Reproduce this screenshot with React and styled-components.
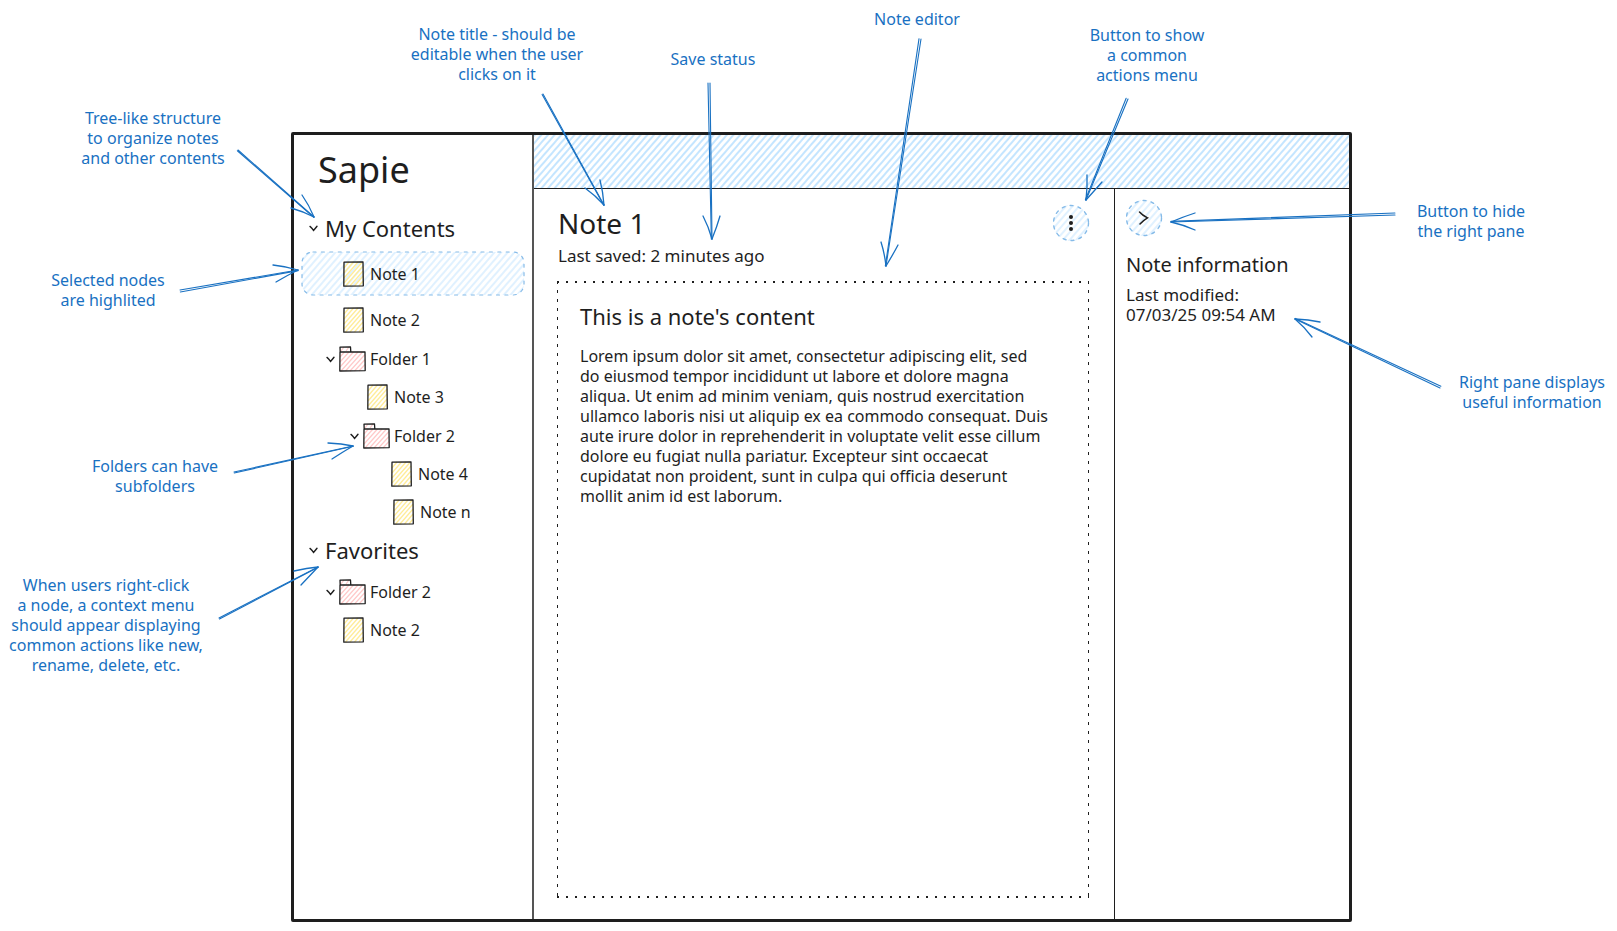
import React from "react";
import styled, { createGlobalStyle, css } from "styled-components";

const ink = "#1e1e1e";
const blue = "#1971c2";

const GlobalStyle = createGlobalStyle`
  *, *::before, *::after { box-sizing: border-box; }
  body {
    margin: 0;
    background: #fff;
    color: ${ink};
    font-family: "Noto Sans", "Open Sans", sans-serif;
    font-size: 16px;
    line-height: 20px;
  }
  h1, h2, h3, p, ul { margin: 0; padding: 0; font-weight: 400; }
  ul { list-style: none; }
`;

const hatch = (color, gap) => css`
  background-image: repeating-linear-gradient(
    131deg,
    ${color} 0 1px,
    transparent 2px ${gap - 1}px,
    ${color} ${gap}px
  );
`;

/* ---------- page frame ---------- */

const Board = styled.div`
  position: relative;
  min-width: 1280px;
  min-height: 100vh;
  padding: 132px 265px 9px 291px;
`;

const Frame = styled.div`
  display: grid;
  grid-template-columns: 240px 1fr;
  min-height: calc(100vh - 141px);
  border: 3px solid ${ink};
  border-radius: 2px;
`;

const Sidebar = styled.nav`
  border-right: 2px solid #555;
`;

const Workspace = styled.div`
  display: flex;
  flex-direction: column;
`;

const TopBar = styled.header`
  height: 54px;
  border-bottom: 1px solid ${ink};
  ${hatch("#c4e5ff", 5)}
`;

const Panes = styled.div`
  display: flex;
  flex: 1;
`;

/* ---------- sidebar tree ---------- */

const Brand = styled.h1`
  padding: 12px 24px 0;
  font-size: 36px;
  line-height: 45px;
`;

const Section = styled.section`
  padding: 0 8px;
`;

const SectionTitle = styled.button`
  display: flex;
  align-items: center;
  gap: 7px;
  width: 100%;
  height: 38px;
  padding: 0 0 0 7px;
  border: 0;
  background: none;
  color: inherit;
  font: inherit;
  font-size: 22px;
  text-align: left;
`;

const FirstSection = styled(Section)`
  padding-top: 17px;
`;

const Tree = styled.ul`
  padding-top: ${(p) => p.$gap}px;
`;

const rowHeight = { note: 38, folder: 39 };

const Row = styled.button`
  position: relative;
  display: flex;
  align-items: center;
  gap: ${(p) => (p.$kind === "note" ? 6 : 4)}px;
  width: 100%;
  height: ${(p) => (p.$selected ? 43 : rowHeight[p.$kind])}px;
  margin-bottom: ${(p) => (p.$selected ? 6 : 0)}px;
  padding: 0 0 0 ${(p) => p.$indent}px;
  border: 0;
  border-radius: 11px;
  background: none;
  color: inherit;
  font: inherit;
  text-align: left;
  ${(p) => p.$selected && hatch("#e0f1ff", 5)}
`;

const Outline = styled.svg`
  position: absolute;
  inset: 0;
  width: 100%;
  height: 100%;
  overflow: visible;
  pointer-events: none;
`;

const Chevron = () => (
  <svg width="9" height="8" viewBox="0 0 9 8" fill="none" stroke={ink} strokeWidth="1.4" strokeLinecap="round">
    <path d="M1 2.400 Q3 4 4.500 6.400 Q6 4.800 8 2.200" />
  </svg>
);

const NoteIcon = () => (
  <svg width="21" height="26" viewBox="0 0 21 26" fill="none">
    <path
      d="M1 7L6 1M1 12L10.500 1M1 17L15 1M1 22L19 1.500M2.500 25L20 5M7 25L20 10M11.500 25L20 15M16 25L20 20"
      stroke="#ffec99"
      strokeWidth="1.300"
    />
    <path d="M1 1.200L20 .8L20.300 24.800L.8 25.200Z" stroke={ink} strokeWidth="1.300" strokeLinejoin="round" />
  </svg>
);

const FolderIcon = () => (
  <svg width="27" height="26" viewBox="0 0 27 26" fill="none">
    <path
      d="M1 11L5.500 6M1 16L10 6M1 21L14.500 6M2 25L19 6M6.500 25L23.500 6M11 25L26 8.500M15.500 25L26 13.500M20 25L26 18.500M2 5L5 1M7 5L10 1"
      stroke="#ffc9c9"
      strokeWidth="1.200"
    />
    <path
      d="M1 6L26 5.800L26.200 24.600L.8 25ZM1.200 6L1 1.200L11.500 1L11.800 5.800"
      stroke={ink}
      strokeWidth="1.300"
      strokeLinejoin="round"
    />
  </svg>
);

function TreeRow({ kind, indent, label, selected }) {
  return (
    <li>
      <Row type="button" $kind={kind} $indent={indent} $selected={selected}>
        {kind === "folder" && <Chevron />}
        {kind === "folder" ? <FolderIcon /> : <NoteIcon />}
        {label}
        {selected && (
          <Outline>
            <rect width="100%" height="100%" rx="11" fill="none" stroke="#86bbe8" strokeWidth="1.2" strokeDasharray="3 5.4" strokeLinecap="round" />
          </Outline>
        )}
      </Row>
    </li>
  );
}

/* ---------- editor and right pane ---------- */

const Editor = styled.main`
  display: flex;
  flex-direction: column;
  flex: 1;
  padding: 16px 25px 21px 23px;
`;

const EditorHead = styled.div`
  display: flex;
  justify-content: space-between;
  align-items: flex-start;
  padding-left: 1px;
`;

const NoteTitle = styled.h2`
  font-size: 28px;
  line-height: 36px;
`;

const Meta = styled.p`
  padding-top: ${(p) => p.$gap}px;
  font-size: 17px;
  white-space: pre-line;
`;

const RoundButton = styled.button`
  position: relative;
  display: grid;
  place-items: center;
  width: 36px;
  height: 36px;
  padding: 0;
  border: 0;
  border-radius: 50%;
  background: none;
  ${hatch("#e0f1ff", 5)}
`;

function SketchButton({ label, children }) {
  return (
    <RoundButton type="button" aria-label={label}>
      {children}
      <Outline>
        <circle cx="18" cy="18" r="17.500" fill="none" stroke="#86bbe8" strokeWidth="1.4" strokeDasharray="3 5.1" strokeLinecap="round" />
      </Outline>
    </RoundButton>
  );
}

const NoteBody = styled.article`
  flex: 1;
  margin-top: 15px;
  padding: 22px 23px;
  background:
    repeating-linear-gradient(90deg, ${ink} 0 2px, transparent 2px 9px) top / 100% 2px no-repeat,
    repeating-linear-gradient(90deg, ${ink} 0 2px, transparent 2px 9px) bottom / 100% 2px no-repeat,
    repeating-linear-gradient(${ink} 0 3px, transparent 3px 9px) left / 1px 100% no-repeat,
    repeating-linear-gradient(${ink} 0 3px, transparent 3px 9px) right / 1px 100% no-repeat;
`;

const ContentHeading = styled.h3`
  font-size: 22px;
  line-height: 26px;
`;

const Paragraph = styled.p`
  padding-top: 17px;
  white-space: pre-line;
`;

const InfoPane = styled.aside`
  width: 235px;
  padding: 11px;
  border-left: 1px solid ${ink};
`;

const InfoHeading = styled.h3`
  padding-top: 16px;
  font-size: 20px;
  line-height: 26px;
`;

/* ---------- annotations pinned around the mockup ---------- */

const Callout = styled.div`
  position: absolute;
  top: ${(p) => p.$top}px;
  ${(p) => (p.$right !== undefined ? `right: ${p.$right}px;` : `left: ${p.$left}px;`)}
  width: ${(p) => p.$width}px;
  color: ${blue};
  text-align: center;
  white-space: pre-line;
  pointer-events: none;
`;

const ArrowLayer = styled.svg`
  position: absolute;
  top: 0;
  left: 0;
  width: 1px;
  height: 1px;
  overflow: visible;
`;

/* Two nearly parallel strokes give each shaft its hand-drawn look. */
function Arrow({ from, to, barbs, spread = 2 }) {
  const [x1, y1] = from;
  const [x2, y2] = to;
  const len = Math.hypot(x2 - x1, y2 - y1);
  const nx = (-(y2 - y1) / len) * spread;
  const ny = ((x2 - x1) / len) * spread;
  return (
    <ArrowLayer fill="none" stroke={blue} strokeWidth="1.1" strokeLinecap="round">
      <path d={`M${x1} ${y1}L${x2} ${y2}`} />
      <path d={`M${x1 + nx} ${y1 + ny}L${x2 + nx / 3} ${y2 + ny / 3}`} />
      {barbs.map(([bx, by]) => (
        <path key={`${bx},${by}`} strokeWidth="1.3" d={`M${bx} ${by}Q${(bx + x2) / 2 + 1} ${(by + y2) / 2 - 1} ${x2} ${y2}`} />
      ))}
    </ArrowLayer>
  );
}

const callouts = [
  {
    text: "Note title - should be\neditable when the user\nclicks on it",
    top: 24, left: 397, width: 200,
    arrow: { from: [146, 70], to: [207, 181], barbs: [[188, 164], [203, 156]], spread: 1 },
  },
  {
    text: "Save status",
    top: 49, left: 653, width: 120,
    arrow: { from: [57, 34], to: [59, 190], barbs: [[50, 167], [67, 167]] },
  },
  {
    text: "Note editor",
    top: 9, left: 857, width: 120,
    arrow: { from: [64, 30], to: [29, 257], barbs: [[24, 233], [41, 236]] },
  },
  {
    text: "Button to show\na common\nactions menu",
    top: 25, right: 400, width: 140,
    arrow: { from: [51, 74], to: [9, 175], barbs: [[10, 150], [25, 157]] },
  },
  {
    text: "Tree-like structure\nto organize notes\nand other contents",
    top: 108, left: 63, width: 180,
    arrow: { from: [175, 42], to: [251, 109], barbs: [[239, 87], [228, 100]], spread: 1 },
  },
  {
    text: "Selected nodes\nare highlited",
    top: 270, left: 38, width: 140,
    arrow: { from: [142, 20], to: [260, 0], barbs: [[235, -5], [238, 12]] },
  },
  {
    text: "Folders can have\nsubfolders",
    top: 456, left: 75, width: 160,
    arrow: { from: [159, 16], to: [278, -10], barbs: [[253, -13], [257, 3]], spread: 1 },
  },
  {
    text: "When users right-click\na node, a context menu\nshould appear displaying\ncommon actions like new,\nrename, delete, etc.",
    top: 575, left: 6, width: 200,
    arrow: { from: [213, 43], to: [312, -8], barbs: [[288, -4], [295, 10]], spread: 1 },
  },
  {
    text: "Button to hide\nthe right pane",
    top: 201, right: 76, width: 140,
    arrow: { from: [-6, 14], to: [-230, 21], barbs: [[-206, 12], [-206, 29]] },
  },
  {
    text: "Right pane displays\nuseful information",
    top: 372, right: 5, width: 160,
    arrow: { from: [-12, 16], to: [-157, -53], barbs: [[-132, -50], [-140, -35]] },
  },
];

const lorem = `Lorem ipsum dolor sit amet, consectetur adipiscing elit, sed
do eiusmod tempor incididunt ut labore et dolore magna
aliqua. Ut enim ad minim veniam, quis nostrud exercitation
ullamco laboris nisi ut aliquip ex ea commodo consequat. Duis
aute irure dolor in reprehenderit in voluptate velit esse cillum
dolore eu fugiat nulla pariatur. Excepteur sint occaecat
cupidatat non proident, sunt in culpa qui officia deserunt
mollit anim id est laborum.`;

export default function App() {
  return (
    <>
      <GlobalStyle />
      <Board>
        <Frame>
          <Sidebar>
            <Brand>Sapie</Brand>
            <FirstSection>
              <SectionTitle type="button"><Chevron />My Contents</SectionTitle>
              <Tree $gap={5}>
                <TreeRow kind="note" indent={41} label="Note 1" selected />
                <TreeRow kind="note" indent={41} label="Note 2" />
                <TreeRow kind="folder" indent={24} label="Folder 1" />
                <TreeRow kind="note" indent={65} label="Note 3" />
                <TreeRow kind="folder" indent={48} label="Folder 2" />
                <TreeRow kind="note" indent={89} label="Note 4" />
                <TreeRow kind="note" indent={91} label="Note n" />
              </Tree>
            </FirstSection>
            <Section>
              <SectionTitle type="button"><Chevron />Favorites</SectionTitle>
              <Tree $gap={3}>
                <TreeRow kind="folder" indent={24} label="Folder 2" />
                <TreeRow kind="note" indent={41} label="Note 2" />
              </Tree>
            </Section>
          </Sidebar>
          <Workspace>
            <TopBar />
            <Panes>
              <Editor>
                <EditorHead>
                  <div>
                    <NoteTitle>Note 1</NoteTitle>
                    <Meta $gap={5}>Last saved: 2 minutes ago</Meta>
                  </div>
                  <SketchButton label="Show actions menu">
                    <svg width="6" height="18" viewBox="0 0 6 18" fill={ink}>
                      <circle cx="3" cy="3" r="2" />
                      <circle cx="3" cy="9" r="2" />
                      <circle cx="3" cy="15" r="2" />
                    </svg>
                  </SketchButton>
                </EditorHead>
                <NoteBody>
                  <ContentHeading>This is a note's content</ContentHeading>
                  <Paragraph>{lorem}</Paragraph>
                </NoteBody>
              </Editor>
              <InfoPane>
                <SketchButton label="Hide the right pane">
                  <svg width="12" height="14" viewBox="0 0 12 14" fill="none" stroke={ink} strokeWidth="1.500" strokeLinecap="round">
                    <path d="M1.500 1Q4 4 9.500 6.800Q5 9.500 2 13" />
                  </svg>
                </SketchButton>
                <InfoHeading>Note information</InfoHeading>
                <Meta $gap={7}>{"Last modified:\n07/03/25 09:54 AM"}</Meta>
              </InfoPane>
            </Panes>
          </Workspace>
        </Frame>
        {callouts.map(({ text, top, left, right, width, arrow }) => (
          <Callout key={text} $top={top} $left={left} $right={right} $width={width}>
            {text}
            <Arrow {...arrow} />
          </Callout>
        ))}
      </Board>
    </>
  );
}
